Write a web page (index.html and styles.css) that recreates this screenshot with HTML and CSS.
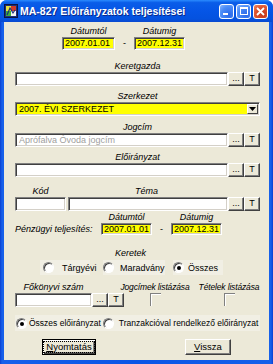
FILE: index.html
```html
<!DOCTYPE html>
<html lang="hu">
<head>
  <meta charset="UTF-8">
  <title>MA-827 Előirányzatok teljesítései</title>
  <link rel="stylesheet" href="styles.css">
</head>
<body>

  <div class="window">
    <div class="titlebar">
      <svg class="app-icon" width="14" height="14" viewBox="0 0 14 14">
        <rect x="0.5" y="0.5" width="13" height="13" fill="#1c2f7a" stroke="#0b1440"/>
        <rect x="2" y="2" width="5" height="5" fill="#e8e040"/>
        <rect x="7" y="2" width="5" height="5" fill="#d23a2a"/>
        <rect x="2" y="7" width="5" height="5" fill="#3fae3a"/>
        <rect x="7" y="7" width="5" height="5" fill="#f4f4f4"/>
        <path d="M3 11 L6 4 L9 9 L11 6" stroke="#1c2f7a" stroke-width="1.2" fill="none"/>
      </svg>
      <span class="title">MA-827 Előirányzatok teljesítései</span>
      <div class="tb-buttons">
        <div class="tb-btn"><span class="min-glyph"></span></div>
        <div class="tb-btn"><span class="max-glyph"></span></div>
        <div class="tb-btn close">
          <svg width="9" height="9" viewBox="0 0 9 9"><path d="M1 1 L8 8 M8 1 L1 8" stroke="#fff" stroke-width="1.8"/></svg>
        </div>
      </div>
    </div>

    <div class="content">
      <div class="top-dates">
        <div class="date-col">
          <div class="lbl">Dátumtól</div>
          <div class="date">2007.01.01</div>
        </div>
        <div class="dash">-</div>
        <div class="date-col">
          <div class="lbl">Dátumig</div>
          <div class="date">2007.12.31</div>
        </div>
      </div>

      <div class="field f-keretgazda">
        <div class="lbl">Keretgazda</div>
        <div class="row">
          <div class="input"></div>
          <div class="btn">...</div>
          <div class="btn">T</div>
        </div>
      </div>

      <div class="field f-szerkezet">
        <div class="lbl">Szerkezet</div>
        <div class="select">
          <span>2007. ÉVI SZERKEZET</span>
          <div class="drop">
            <svg width="7" height="4" viewBox="0 0 7 4"><path d="M0 0 H7 L3.5 4 Z" fill="#000"/></svg>
          </div>
        </div>
      </div>

      <div class="field f-jogcim">
        <div class="lbl">Jogcím</div>
        <div class="row">
          <div class="input disabled">Aprófalva Óvoda jogcím</div>
          <div class="btn">...</div>
          <div class="btn">T</div>
        </div>
      </div>

      <div class="field f-eloiranyzat">
        <div class="lbl">Előirányzat</div>
        <div class="row">
          <div class="input"></div>
          <div class="btn">...</div>
          <div class="btn">T</div>
        </div>
      </div>

      <div class="field f-kod">
        <div class="row labels">
          <div class="lbl kod">Kód</div>
          <div class="lbl tema">Téma</div>
        </div>
        <div class="row">
          <div class="input kod"></div>
          <div class="input tema"></div>
          <div class="btn">...</div>
          <div class="btn">T</div>
        </div>
      </div>

      <div class="penzugyi">
        <div class="row labels">
          <div class="lbl pz-from">Dátumtól</div>
          <div class="lbl pz-to">Dátumig</div>
        </div>
        <div class="row">
          <div class="pz-label">Pénzügyi teljesítés:</div>
          <div class="date">2007.01.01</div>
          <div class="dash">-</div>
          <div class="date">2007.12.31</div>
        </div>
      </div>

      <div class="keretek">
        <div class="lbl">Keretek</div>
        <div class="radios">
          <div class="radio-item r1"><span class="radio"></span>Tárgyévi</div>
          <div class="radio-item r2"><span class="radio"></span>Maradvány</div>
          <div class="radio-item r3"><span class="radio on"></span>Összes</div>
        </div>
      </div>

      <div class="fokonyv">
        <div class="fk-col">
          <div class="lbl">Főkönyvi szám</div>
          <div class="row">
            <div class="input"></div>
            <div class="btn">...</div>
            <div class="btn">T</div>
          </div>
        </div>
        <div class="chk-col c1">
          <div class="lbl">Jogcímek listázása</div>
          <span class="check"></span>
        </div>
        <div class="chk-col c2">
          <div class="lbl">Tételek listázása</div>
          <span class="check"></span>
        </div>
      </div>

      <div class="scope">
        <div class="radio-item s1"><span class="radio on"></span>Összes előirányzat</div>
        <div class="radio-item s2"><span class="radio"></span>Tranzakcióval rendelkező előirányzat</div>
      </div>

      <div class="actions">
        <div class="push default"><span><u>N</u>yomtatás</span></div>
        <div class="push back"><u>V</u>issza</div>
      </div>
    </div>
  </div>

</body>
</html>
```

FILE: styles.css
```css
* {
  box-sizing: border-box;
}

html, body {
  margin: 0;
  padding: 0;
}

body {
  width: 273px;
  height: 364px;
  overflow: hidden;
  font-family: 'Liberation Sans', Arial, sans-serif;
  font-size: 9px;
  color: #000;
  background: #fff;
}

.window {
  width: 273px;
  height: 364px;
  display: flex;
  flex-direction: column;
  padding: 0 4px 4px;
  background: linear-gradient(to right, #0a3fd0, #1660ea 2px, #0a55e6 50%, #1660ea calc(100% - 2px), #0a3fd0);
  border-radius: 7px 7px 0 0;
}

/* title bar */
.titlebar {
  height: 22px;
  margin: 0 -4px;
  padding: 0 5px 0 4px;
  display: flex;
  align-items: center;
  border-radius: 7px 7px 0 0;
  background: linear-gradient(#2b8bff, #0a5de8 12%, #0555e6 50%, #0452df 85%, #0a4ad0);
}

.app-icon {
  flex: none;
  margin-right: 2px;
}

.title {
  flex: 1;
  color: #fff;
  font-weight: bold;
  font-size: 10.5px;
  text-shadow: 1px 1px 0 #0b2a8a;
  white-space: nowrap;
}

.tb-buttons {
  display: flex;
  gap: 2px;
}

.tb-btn {
  width: 15px;
  height: 15px;
  border: 1px solid #fff;
  border-radius: 3px;
  background: radial-gradient(circle at 70% 75%, #2a68e8, #4b8cf7 60%, #8ab8ff);
  display: flex;
  align-items: center;
  justify-content: center;
  position: relative;
}

.min-glyph {
  position: absolute;
  left: 3px;
  bottom: 3px;
  width: 5px;
  height: 2px;
  background: #fff;
}

.max-glyph {
  width: 8px;
  height: 8px;
  border: 1px solid #fff;
  border-top-width: 2px;
}

.tb-btn.close {
  background: radial-gradient(circle at 70% 75%, #c4361a, #e0552f 60%, #f08a66);
}

/* dialog body */
.content {
  flex: 1;
  background: #ece9d8;
  padding: 3px 9px 0 11px;
}

.lbl {
  font-style: italic;
  text-align: center;
  line-height: 12px;
  height: 12px;
  white-space: nowrap;
}

.row {
  display: flex;
  align-items: center;
}

.input,
.date,
.select {
  height: 14px;
  border: 1px solid;
  border-color: #808080 #fff #fff #808080;
  box-shadow: inset 1px 1px 0 #404040, inset -1px -1px 0 #d4d0c8;
  background: #fff;
  padding: 0 3px;
  line-height: 12px;
  white-space: nowrap;
  overflow: hidden;
}

.input {
  flex: 1;
}

.input.disabled {
  color: #a0a0a0;
}

.btn {
  flex: none;
  width: 16px;
  height: 14px;
  border: 1px solid;
  border-color: #fff #404040 #404040 #fff;
  box-shadow: inset -1px -1px 0 #808080;
  background: #ece9d8;
  text-align: center;
  line-height: 11px;
  font-size: 9px;
}

.btn:first-of-type {
  margin-left: 1px;
}

.date {
  width: 53px;
  height: 13px;
  background: #ffff00;
  padding: 0 2px;
  line-height: 11px;
}

.dash {
  text-align: center;
  width: 19px;
}

.top-dates {
  display: flex;
  align-items: flex-end;
  margin-left: 47px;
}

.top-dates .date-col:last-child .date {
  width: 51px;
}

.top-dates .dash {
  line-height: 13px;
}

.f-keretgazda { margin-top: 10px; }
.f-szerkezet { margin-top: 4px; }
.f-jogcim { margin-top: 5px; }
.f-eloiranyzat { margin-top: 4px; }
.f-kod { margin-top: 8px; }

.select {
  display: flex;
  align-items: center;
  justify-content: space-between;
  background: #ffff00;
  padding: 0 1px 0 3px;
}

.drop {
  width: 11px;
  height: 10px;
  border: 1px solid;
  border-color: #fff #404040 #404040 #fff;
  background: #ece9d8;
  display: flex;
  align-items: center;
  justify-content: center;
}

.labels .lbl.kod { width: 51px; }
.labels .lbl.tema { width: 161px; }

.input.kod {
  flex: none;
  width: 51px;
  margin-right: 2px;
}

/* pénzügyi teljesítés */
.penzugyi .labels {
  margin-left: 86px;
}

.pz-from { width: 51px; }
.pz-to { width: 51px; margin-left: 19px; }

.pz-label {
  width: 86px;
  font-style: italic;
}

.penzugyi .date {
  width: 51px;
  height: 12px;
}

/* radios */
.keretek {
  margin-top: 12px;
}

.keretek .lbl {
  margin-left: -14px;
}

.radios {
  display: flex;
  margin-top: 1px;
}

.radio-item {
  display: flex;
  align-items: center;
  height: 15px;
  background: #f1efe4;
  white-space: nowrap;
}

.radio {
  flex: none;
  width: 11px;
  height: 11px;
  border-radius: 50%;
  background: #fff;
  border: 1px solid;
  border-color: #808080 #fff #fff #808080;
  box-shadow: inset 1px 1px 0 #404040;
  margin-right: 4px;
  position: relative;
}

.radio.on::after {
  content: "";
  position: absolute;
  left: 3px;
  top: 3px;
  width: 4px;
  height: 4px;
  border-radius: 50%;
  background: #000;
}

.r1 { margin-left: 25px; width: 50px; padding-left: 3px; }
.r2 { margin-left: 13px; width: 62px; }
.r3 { margin-left: 8px; width: 50px; }

.r1 .radio { margin-right: 8px; }
.r2 .radio { margin-right: 6px; }

/* főkönyvi szám */
.fokonyv {
  display: flex;
  margin-top: 6px;
}

.fk-col {
  width: 110px;
  flex: none;
}

.fk-col .lbl {
  width: 77px;
}

.fk-col .input {
  flex: none;
  width: 77px;
}

.chk-col {
  flex: none;
  display: flex;
  flex-direction: column;
  align-items: center;
}

.chk-col .lbl {
  font-size: 8.5px;
  letter-spacing: -0.15px;
}

.c1 { width: 72px; margin-left: -6px; }
.c2 { width: 64px; margin-left: 6px; }

.check {
  width: 11px;
  height: 13px;
  background: #ece9d8;
  border-top: 1px solid #808080;
  border-left: 1px solid #808080;
  box-shadow: inset 1px 1px 0 #fff;
}

/* scope radios */
.scope {
  display: flex;
  margin-top: 8px;
  background: #f1efe4;
  height: 16px;
  align-items: center;
  font-size: 8.5px;
}

.scope .radio-item {
  background: none;
}

.s1 { padding-left: 1px; margin-right: 2px; }
.s1 .radio { margin-right: 2px; }
.s2 .radio { margin-right: 5px; }

/* buttons */
.actions {
  display: flex;
  margin-top: 8px;
}

.push {
  height: 16px;
  border: 1px solid;
  border-color: #fff #404040 #404040 #fff;
  box-shadow: inset -1px -1px 0 #808080;
  background: #ece9d8;
  text-align: center;
  line-height: 14px;
  font-size: 9.5px;
}

.push.default {
  width: 54px;
  margin-left: 27px;
  border: 1px solid #000;
  box-shadow: inset 1px 1px 0 #fff, inset -1px -1px 0 #404040, inset -2px -2px 0 #808080;
}

.push.default span {
  display: inline-block;
  outline: 1px dotted #000;
  padding: 0 2px;
  line-height: 10px;
  margin-top: 1px;
}

.push.back {
  width: 46px;
  margin-left: 89px;
}
```
